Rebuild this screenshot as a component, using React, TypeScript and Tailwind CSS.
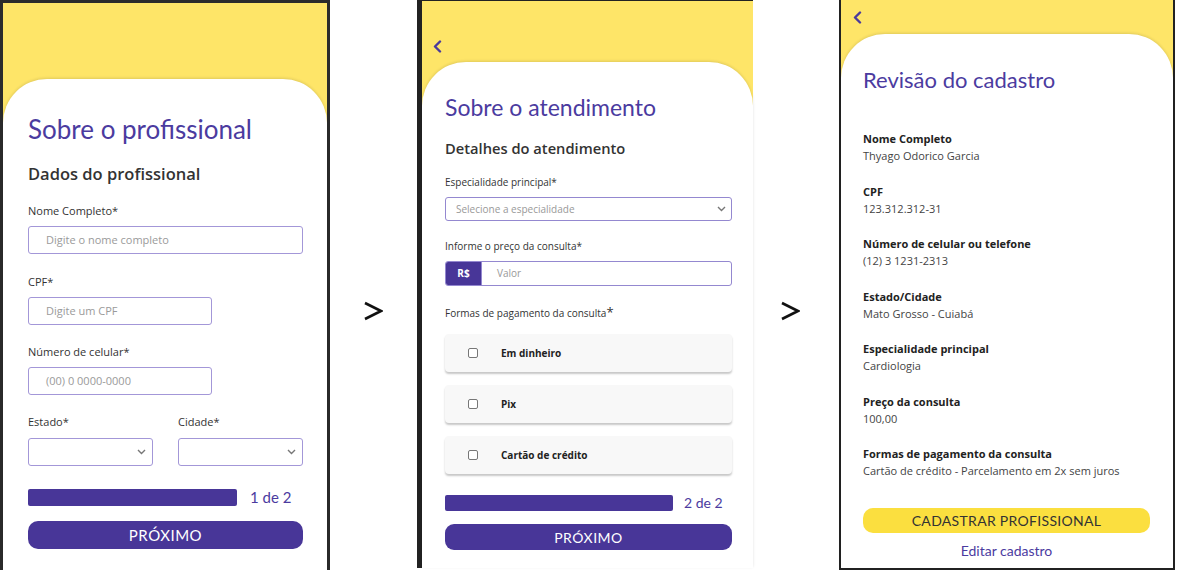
import React from 'react';

const sans = "font-['Open_Sans',sans-serif]";
const round = "font-['Lato',sans-serif]";

function Chevron() {
  return (
    <svg width="9" height="13" viewBox="0 0 9 13" fill="none">
      <polyline points="7,1.5 2,6.5 7,11.5" stroke="#4a3a9c" strokeWidth="2.4" strokeLinecap="round" strokeLinejoin="round" />
    </svg>
  );
}

function Arrow() {
  return (
    <svg width="20" height="20" viewBox="0 0 20 20" fill="none">
      <polyline points="2,2 18,10 2,18" stroke="#111" strokeWidth="2.6" strokeLinejoin="miter" />
    </svg>
  );
}

function SelectCaret() {
  return (
    <svg width="9" height="6" viewBox="0 0 9 6" fill="none">
      <polyline points="1,1 4.5,4.5 8,1" stroke="#777" strokeWidth="1.4" />
    </svg>
  );
}

function Field({ label, placeholder, width }: { label: string; placeholder: string; width: string }) {
  return (
    <>
      <p className="text-[11px] leading-[18px] text-[#333]">{label}</p>
      <div className={`${width} h-[28px] border-[1.5px] border-[#a397d8] rounded-[3px] flex items-center pl-[17px] text-[11px] text-[#9a9a9a] mt-[6px]`}>
        {placeholder}
      </div>
    </>
  );
}

function PayOption({ label }: { label: string }) {
  return (
    <div className="h-[38px] bg-[#f8f8f8] rounded-[4px] shadow-[0_2px_2px_rgba(0,0,0,0.22)] flex items-center">
      <span className="ml-[23px] w-[10px] h-[10px] border border-[#777] rounded-[2px] bg-white" />
      <span className="ml-[23px] text-[10px] font-bold text-[#222]">{label}</span>
    </div>
  );
}

function ReviewItem({ label, value }: { label: string; value: string }) {
  return (
    <div className="mt-[18.5px] first:mt-0">
      <p className="text-[11px] leading-[17px] font-bold text-[#222]">{label}</p>
      <p className="text-[11px] leading-[17px] text-[#444]">{value}</p>
    </div>
  );
}

export default function App() {
  return (
    <div className={`w-[1177px] h-[570px] bg-white flex overflow-hidden ${sans}`}>
      {/* Step 1 */}
      <div className="w-[330px] h-[570px] shrink-0 border-l-[3px] border-t-[3px] border-r-[3px] border-[#2b2b2b] bg-[#fee568] flex flex-col">
        <div className="h-[76px] shrink-0" />
        <div className="flex-1 bg-white rounded-t-[44px] shadow-[0_-1px_3px_rgba(0,0,0,0.12)] pl-[25px] pr-[24px] pt-[35px]">
          <h1 className={`${round} text-[26px] leading-[30px] text-[#4b3b9f]`}>Sobre o profissional</h1>
          <h2 className="text-[16.5px] leading-[22px] font-semibold text-[#333] mt-[19px]">Dados do profissional</h2>
          <div className="mt-[17px]">
            <Field label="Nome Completo*" placeholder="Digite o nome completo" width="w-full" />
          </div>
          <div className="mt-[19px]">
            <Field label="CPF*" placeholder="Digite um CPF" width="w-[184px]" />
          </div>
          <div className="mt-[18px]">
            <Field label="Número de celular*" placeholder="(00) 0 0000-0000" width="w-[184px]" />
          </div>
          <div className="mt-[18px] flex gap-[25px]">
            {['Estado*', 'Cidade*'].map(l => (
              <div key={l} className="flex-1">
                <p className="text-[11px] leading-[18px] text-[#333]">{l}</p>
                <div className="mt-[7px] h-[28px] border-[1.5px] border-[#a397d8] rounded-[3px] flex items-center justify-end pr-[6px]">
                  <SelectCaret />
                </div>
              </div>
            ))}
          </div>
          <div className="mt-[23px] flex items-center">
            <div className="w-[209px] h-[17px] bg-[#483698] rounded-[2px]" />
            <span className={`${round} ml-[13px] text-[15px] leading-none text-[#4b3b9f]`}>1 de 2</span>
          </div>
          <button className={`${round} mt-[15px] w-full h-[28px] bg-[#483698] rounded-[10px] text-white text-[15px] tracking-[0.5px]`}>
            PRÓXIMO
          </button>
        </div>
      </div>

      <div className="w-[87px] shrink-0 pl-[33px] pt-[301px]">
        <Arrow />
      </div>

      {/* Step 2 */}
      <div className="w-[336px] h-[568px] shrink-0 border-l-[5px] border-t border-[#222] bg-[#fee568] flex flex-col">
        <div className="h-[61px] shrink-0 pl-[11px] pt-[39px]">
          <Chevron />
        </div>
        <div className="flex-1 bg-white rounded-t-[44px] shadow-[0_-1px_3px_rgba(0,0,0,0.12)] pl-[23px] pr-[21px] pt-[30px]">
          <h1 className={`${round} text-[23px] leading-[30px] text-[#4b3b9f]`}>Sobre o atendimento</h1>
          <h2 className="text-[14.7px] leading-[20px] font-semibold text-[#333] mt-[16px]">Detalhes do atendimento</h2>
          <p className="text-[10px] leading-[16px] text-[#333] mt-[16px]">Especialidade principal*</p>
          <div className="mt-[7px] h-[24px] border-[1.5px] border-[#9488d0] rounded-[3px] flex items-center justify-between pl-[10px] pr-[5px] text-[10px] text-[#999]">
            Selecione a especialidade
            <SelectCaret />
          </div>
          <p className="text-[10px] leading-[16px] text-[#333] mt-[17px]">Informe o preço da consulta*</p>
          <div className="mt-[7px] h-[25px] flex border-[1.5px] border-[#9488d0] rounded-[3px] overflow-hidden">
            <div className="w-[35px] bg-[#483698] text-white text-[10px] font-bold flex items-center justify-center">R$</div>
            <div className="flex-1 flex items-center pl-[15px] text-[10px] text-[#999] border-l border-[#9488d0]">Valor</div>
          </div>
          <p className="text-[10px] leading-[16px] text-[#333] mt-[18px]">
            Formas de pagamento da consulta<span className="text-[13px]">*</span>
          </p>
          <div className="mt-[13px] flex flex-col gap-[13px]">
            <PayOption label="Em dinheiro" />
            <PayOption label="Pix" />
            <PayOption label="Cartão de crédito" />
          </div>
          <div className="mt-[21px] flex items-center">
            <div className="w-[228px] h-[16px] bg-[#483698] rounded-[2px]" />
            <span className={`${round} ml-[11px] text-[14px] leading-none text-[#4b3b9f]`}>2 de 2</span>
          </div>
          <button className={`${round} mt-[13px] w-full h-[26px] bg-[#483698] rounded-[9px] text-white text-[14px] tracking-[0.5px]`}>
            PRÓXIMO
          </button>
        </div>
      </div>

      <div className="w-[86px] shrink-0 pl-[27px] pt-[301px]">
        <Arrow />
      </div>

      {/* Review */}
      <div className="w-[336px] h-[570px] shrink-0 border-l-2 border-r-2 border-b-2 border-[#222] bg-[#fee568] flex flex-col">
        <div className="h-[34px] shrink-0 pl-[12px] pt-[11px]">
          <Chevron />
        </div>
        <div className="flex-1 bg-white rounded-t-[44px] shadow-[0_-1px_3px_rgba(0,0,0,0.12)] pl-[22px] pr-[23px] pt-[31px]">
          <h1 className={`${round} text-[22px] leading-[30px] text-[#4b3b9f]`}>Revisão do cadastro</h1>
          <div className="mt-[35px]">
            <ReviewItem label="Nome Completo" value="Thyago Odorico Garcia" />
            <ReviewItem label="CPF" value="123.312.312-31" />
            <ReviewItem label="Número de celular ou telefone" value="(12) 3 1231-2313" />
            <ReviewItem label="Estado/Cidade" value="Mato Grosso - Cuiabá" />
            <ReviewItem label="Especialidade principal" value="Cardiologia" />
            <ReviewItem label="Preço da consulta" value="100,00" />
            <ReviewItem label="Formas de pagamento da consulta" value="Cartão de crédito - Parcelamento em 2x sem juros" />
          </div>
          <button className={`${round} mt-[29px] w-full h-[25px] bg-[#fbdf3f] rounded-[10px] text-[#333] text-[14px] tracking-[0.3px]`}>
            CADASTRAR PROFISSIONAL
          </button>
          <p className={`${round} mt-[9px] text-center text-[14px] leading-[18px] text-[#4b3b9f]`}>Editar cadastro</p>
        </div>
      </div>
    </div>
  );
}
